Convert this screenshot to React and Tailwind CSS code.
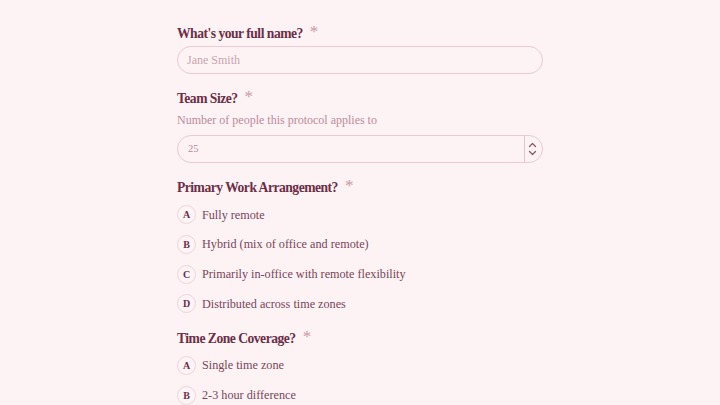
import React from "react";

const serif = { fontFamily: '"Liberation Serif", "DejaVu Serif", serif' };

function Label({ children }) {
  return (
    <div className="flex items-start text-[13.6px] text-[#6a2f47] leading-[20px] tracking-[-0.5px]" style={serif}>
      <span className="font-bold">{children}</span>
      <span className="ml-[7px] text-[#c99aa9] text-[17px] leading-[16px]">*</span>
    </div>
  );
}

function Option({ letter, text }) {
  return (
    <div className="flex items-center h-[29.7px]">
      <div className="w-[19px] h-[19px] rounded-full border border-[#f0d3da] bg-[#fdf4f6] flex items-center justify-center text-[10px] text-[#6a2f47] font-semibold">
        {letter}
      </div>
      <span className="ml-[6px] text-[12.2px] text-[#7a4659]">{text}</span>
    </div>
  );
}

export default function App() {
  return (
    <div className="w-[720px] h-[405px] overflow-hidden bg-[#fdf2f4]" style={serif}>
      <div className="ml-[177px] w-[366px] pt-[24px]">
        <Label>What's your full name?</Label>
        <div className="mt-[2px] h-[28px] rounded-full border border-[#ecc9d3] bg-[#fdf3f5] flex items-center pl-[9px] text-[12px] text-[#c9a3b1]">
          Jane Smith
        </div>

        <div className="mt-[15px]">
          <Label>Team Size?</Label>
        </div>
        <div className="mt-[3px] text-[12px] text-[#b98c9c] leading-[16px]">Number of people this protocol applies to</div>
        <div className="mt-[7px] h-[28px] rounded-full border border-[#ecc9d3] bg-[#fdf3f5] flex items-stretch">
          <div className="flex-1 flex items-center pl-[10px] text-[10.5px] text-[#b98c9c]">25</div>
          <div className="w-[18px] border-l border-[#e6c3cd] flex flex-col items-center justify-center gap-[2px] pr-[2px]">
            <svg width="9" height="6" viewBox="0 0 9 6" fill="none" stroke="#8a5a6c" strokeWidth="1.3" strokeLinecap="round" strokeLinejoin="round"><path d="M1.5 4.5 4.5 1.5 7.5 4.5" /></svg>
            <svg width="9" height="6" viewBox="0 0 9 6" fill="none" stroke="#8a5a6c" strokeWidth="1.3" strokeLinecap="round" strokeLinejoin="round"><path d="M1.5 1.5 4.5 4.5 7.5 1.5" /></svg>
          </div>
        </div>

        <div className="mt-[15px]">
          <Label>Primary Work Arrangement?</Label>
        </div>
        <div className="mt-[2px]">
          <Option letter="A" text="Fully remote" />
          <Option letter="B" text="Hybrid (mix of office and remote)" />
          <Option letter="C" text="Primarily in-office with remote flexibility" />
          <Option letter="D" text="Distributed across time zones" />
        </div>

        <div className="mt-[10px]">
          <Label>Time Zone Coverage?</Label>
        </div>
        <div className="mt-[2px]">
          <Option letter="A" text="Single time zone" />
          <Option letter="B" text="2-3 hour difference" />
        </div>
      </div>
    </div>
  );
}
